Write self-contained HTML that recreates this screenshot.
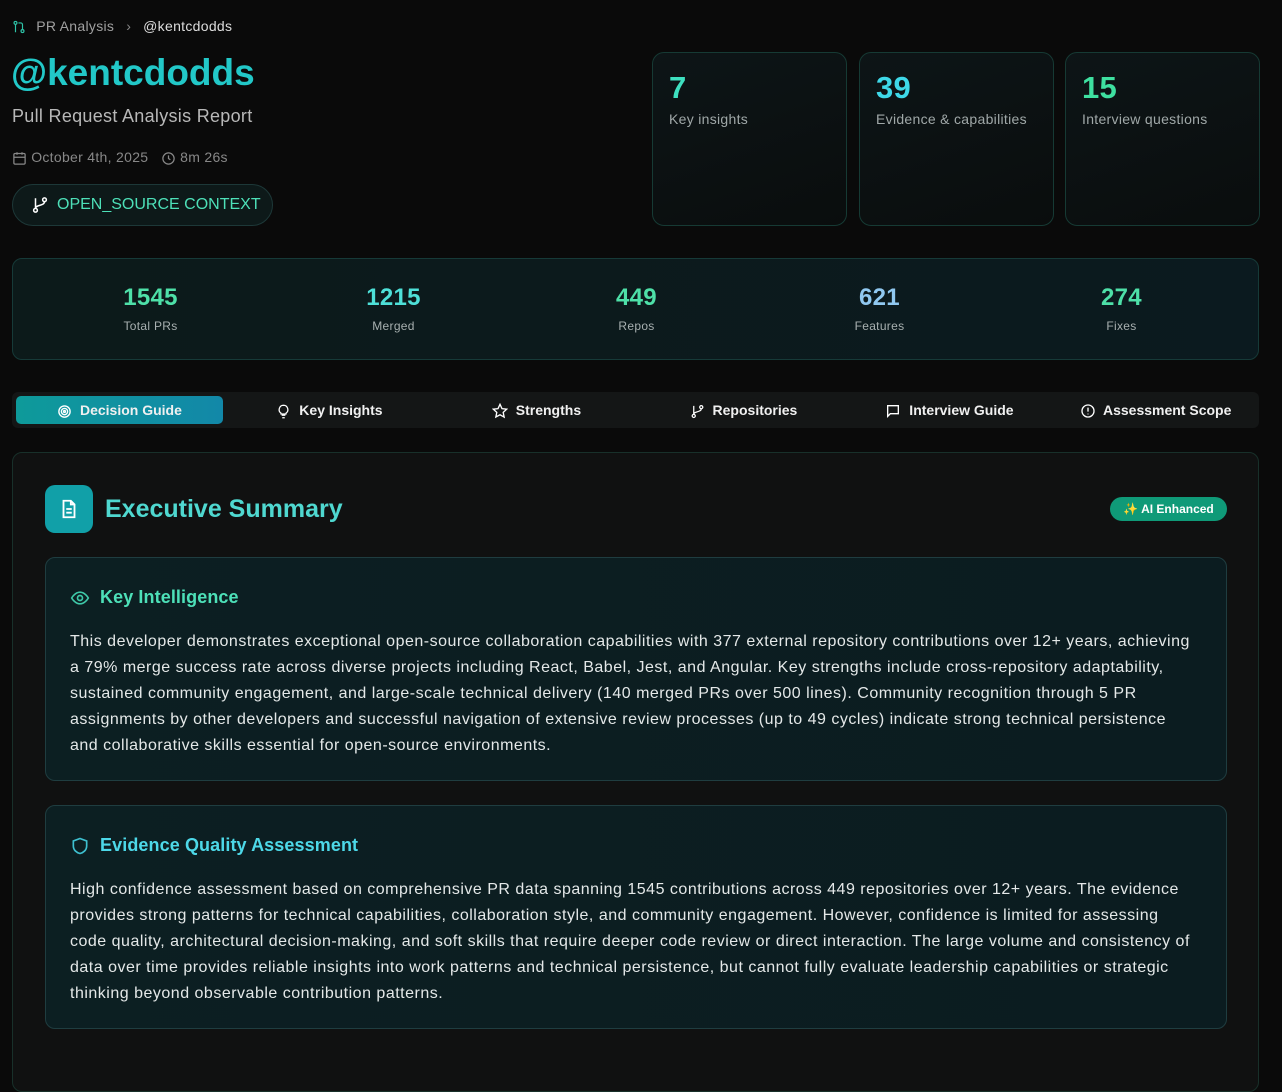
<!DOCTYPE html>
<html><head><meta charset="utf-8"><style>
*{box-sizing:border-box;margin:0;padding:0}
body{width:1282px;height:1060px;background:#0a0a0a;font-family:"Liberation Sans",sans-serif;color:#ddd;position:relative;overflow:hidden;letter-spacing:0.3px}
.a{position:absolute}
svg{display:inline-block;vertical-align:middle}
.card{position:absolute;top:52px;width:195px;height:174px;border:1px solid #163a34;border-radius:12px;background:linear-gradient(160deg,#0d1517,#0a0d0d);padding:18px 16px}
.card b{display:block;font-size:31px;line-height:34px}
.card span{display:block;font-size:14px;color:#a0a8a8;margin-top:6px}
.st{position:absolute;top:283px;width:243px;text-align:center}
.st b{display:block;font-size:24px;line-height:30px}
.st span{display:block;font-size:12px;color:#a8b0b0;margin-top:6px}
.tab{position:absolute;top:396px;height:28px;line-height:28px;font-size:14px;font-weight:bold;color:#f0f0f0;text-align:center;letter-spacing:0}
.tab svg{margin-right:4px}
.box{position:absolute;left:45px;width:1182px;border:1px solid #1f3d40;border-radius:10px;background:linear-gradient(90deg,#0c1f22,#0b1c20);padding:0 24px}
.box h3{font-size:18px;margin-top:27px;height:24px;line-height:24px;letter-spacing:0.1px}
.box p{font-size:16px;line-height:26px;color:#e4e8e8;margin-top:20px;letter-spacing:0.5px;white-space:nowrap}
</style></head><body>
<div class="a" style="left:12px;top:17px;font-size:14px;color:#a0a0a0;line-height:18px">
<svg width="14" height="14" viewBox="0 0 24 24" fill="none" stroke="#2ec4a8" stroke-width="2"><circle cx="6" cy="5" r="2.5"/><circle cx="18" cy="19" r="2.5"/><path d="M6 8v13M11 5h4a3 3 0 0 1 3 3v8"/></svg>
<span style="margin-left:6px">PR Analysis</span><span style="margin:0 12px;color:#888">›</span><span style="color:#ddd">@kentcdodds</span></div>
<div class="a" style="left:11px;top:52px;font-size:37px;font-weight:bold;color:#22c8c8;line-height:42px;letter-spacing:0">@kentcdodds</div>
<div class="a" style="left:12px;top:106px;font-size:18px;color:#b8b8b8">Pull Request Analysis Report</div>
<div class="a" style="left:12px;top:149px;font-size:14px;color:#888">
<svg width="15" height="15" viewBox="0 0 24 24" fill="none" stroke="#888" stroke-width="2"><rect x="3" y="4" width="18" height="17" rx="2"/><path d="M3 10h18M8 2v4M16 2v4"/></svg> October 4th, 2025 &nbsp;
<svg width="15" height="15" viewBox="0 0 24 24" fill="none" stroke="#888" stroke-width="2"><circle cx="12" cy="12" r="9"/><path d="M12 7v5l3 2"/></svg> 8m 26s</div>
<div class="a" style="left:12px;top:184px;width:261px;height:42px;border-radius:21px;border:1px solid #1d3838;background:#0d1919;font-size:16px;color:#4de0b8;line-height:40px;padding-left:18px;letter-spacing:0">
<svg width="18" height="18" viewBox="0 0 24 24" fill="none" stroke="#fff" stroke-width="2"><circle cx="6" cy="19" r="2.5"/><circle cx="18" cy="5" r="2.5"/><path d="M6 3v13.5M18 7.5c0 6-12 4-12 9"/></svg><span style="margin-left:8px">OPEN_SOURCE CONTEXT</span></div>

<div class="card" style="left:652px"><b style="color:#3ee0c0">7</b><span>Key insights</span></div>
<div class="card" style="left:859px"><b style="color:#3ed8e8">39</b><span>Evidence &amp; capabilities</span></div>
<div class="card" style="left:1065px"><b style="color:#3ee0a0">15</b><span>Interview questions</span></div>

<div class="a" style="left:12px;top:258px;width:1247px;height:102px;border:1px solid #163a38;border-radius:10px;background:linear-gradient(90deg,#0c1a1a,#0b1a1f)"></div>
<div class="st" style="left:29px"><b style="color:#4ee0a8">1545</b><span>Total PRs</span></div>
<div class="st" style="left:272px"><b style="color:#4ee0d8">1215</b><span>Merged</span></div>
<div class="st" style="left:515px"><b style="color:#4ee0a8">449</b><span>Repos</span></div>
<div class="st" style="left:758px"><b style="color:#90c8f0">621</b><span>Features</span></div>
<div class="st" style="left:1000px"><b style="color:#4ee0a8">274</b><span>Fixes</span></div>

<div class="a" style="left:12px;top:392px;width:1247px;height:36px;border-radius:6px;background:#141616"></div>
<div class="tab" style="left:16px;width:207px;border-radius:5px;background:linear-gradient(90deg,#0e9a9a,#1288a8)"><svg width="15" height="15" viewBox="0 0 24 24" fill="none" stroke="#fff" stroke-width="2.2"><circle cx="12" cy="12" r="9"/><circle cx="12" cy="12" r="5"/><circle cx="12" cy="12" r="1.5"/></svg> Decision Guide</div>
<div class="tab" style="left:226px;width:207px"><svg width="15" height="15" viewBox="0 0 24 24" fill="none" stroke="#fff" stroke-width="2"><path d="M9 18h6M10 22h4M12 2a7 7 0 0 0-4 12.7V16h8v-1.3A7 7 0 0 0 12 2z"/></svg> Key Insights</div>
<div class="tab" style="left:433px;width:207px"><svg width="16" height="16" viewBox="0 0 24 24" fill="none" stroke="#fff" stroke-width="2"><path d="M12 2l3 6.5 7 .8-5.2 4.8 1.4 7L12 17.6 5.8 21l1.4-7L2 9.3l7-.8z"/></svg> Strengths</div>
<div class="tab" style="left:640px;width:207px"><svg width="15" height="15" viewBox="0 0 24 24" fill="none" stroke="#fff" stroke-width="2"><circle cx="6" cy="19" r="2.5"/><circle cx="18" cy="5" r="2.5"/><path d="M6 3v13.5M18 7.5c0 6-12 4-12 9"/></svg> Repositories</div>
<div class="tab" style="left:846px;width:207px"><svg width="16" height="16" viewBox="0 0 24 24" fill="none" stroke="#fff" stroke-width="2"><path d="M4 4h16v12H8l-4 4z"/></svg> Interview Guide</div>
<div class="tab" style="left:1052px;width:207px"><svg width="16" height="16" viewBox="0 0 24 24" fill="none" stroke="#fff" stroke-width="2"><circle cx="12" cy="12" r="9"/><path d="M12 7v6M12 16v1"/></svg> Assessment Scope</div>

<div class="a" style="left:12px;top:452px;width:1247px;height:640px;border:1px solid #18302a;border-radius:10px;background:#101111"></div>
<div class="a" style="left:45px;top:485px;width:48px;height:48px;border-radius:10px;background:#11a0a8;display:flex;align-items:center;justify-content:center"><svg width="22" height="22" viewBox="0 0 24 24" fill="none" stroke="#fff" stroke-width="2"><path d="M14 3H6v18h12V7z"/><path d="M14 3v4h4M9 12h6M9 16h6"/></svg></div>
<div class="a" style="left:105px;top:494px;font-size:25px;font-weight:bold;color:#4fd8d0;line-height:30px;letter-spacing:0">Executive Summary</div>
<div class="a" style="left:1110px;top:497px;width:117px;height:24px;border-radius:12px;background:#0f9a78;color:#fff;font-size:12px;font-weight:bold;line-height:24px;text-align:center;letter-spacing:0">✨ AI Enhanced</div>

<div class="box" style="top:557px;height:224px">
<h3 style="color:#4de0b8"><svg width="20" height="20" viewBox="0 0 24 24" fill="none" stroke="#3ec8a8" stroke-width="2"><path d="M2 12s4-7 10-7 10 7 10 7-4 7-10 7S2 12 2 12z"/><circle cx="12" cy="12" r="3"/></svg><span style="margin-left:10px">Key Intelligence</span></h3>
<p>This developer demonstrates exceptional open-source collaboration capabilities with 377 external repository contributions over 12+ years, achieving<br>a 79% merge success rate across diverse projects including React, Babel, Jest, and Angular. Key strengths include cross-repository adaptability,<br>sustained community engagement, and large-scale technical delivery (140 merged PRs over 500 lines). Community recognition through 5 PR<br>assignments by other developers and successful navigation of extensive review processes (up to 49 cycles) indicate strong technical persistence<br>and collaborative skills essential for open-source environments.</p>
</div>
<div class="box" style="top:805px;height:224px">
<h3 style="color:#4dd8e8"><svg width="20" height="20" viewBox="0 0 24 24" fill="none" stroke="#3ec0d0" stroke-width="2"><path d="M12 3l8 3v6c0 5-4 8-8 9-4-1-8-4-8-9V6z"/></svg><span style="margin-left:10px">Evidence Quality Assessment</span></h3>
<p>High confidence assessment based on comprehensive PR data spanning 1545 contributions across 449 repositories over 12+ years. The evidence<br>provides strong patterns for technical capabilities, collaboration style, and community engagement. However, confidence is limited for assessing<br>code quality, architectural decision-making, and soft skills that require deeper code review or direct interaction. The large volume and consistency of<br>data over time provides reliable insights into work patterns and technical persistence, but cannot fully evaluate leadership capabilities or strategic<br>thinking beyond observable contribution patterns.</p>
</div>
</body></html>
